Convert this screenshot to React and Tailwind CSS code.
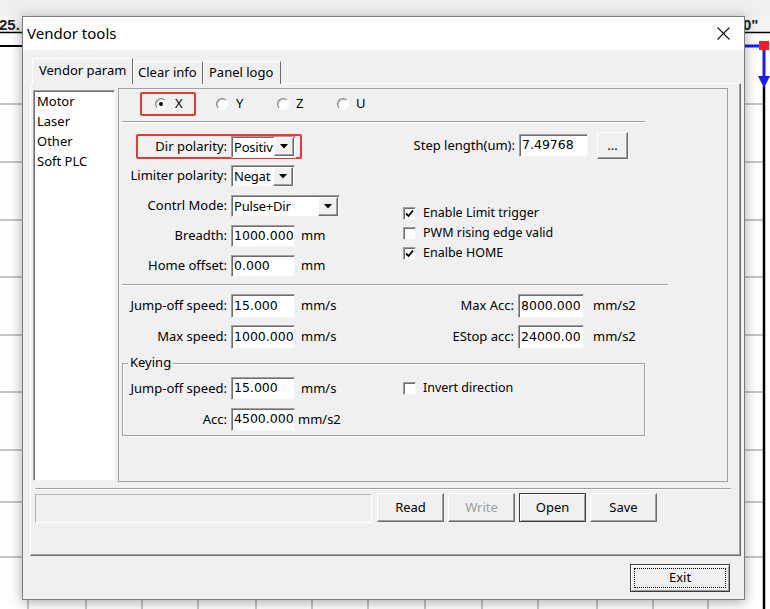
import { useState } from 'react'

const ui = { fontFamily: '"Noto Sans", "Open Sans", sans-serif' }
const num = { fontFamily: '"DejaVu Sans", Verdana, sans-serif' }

const sunken = 'border border-t-[#a0a0a0] border-l-[#a0a0a0] border-r-[#f4f4f4] border-b-[#f4f4f4] shadow-[inset_1px_1px_0_#6d6d6d] bg-white'
const raised = 'border border-t-white border-l-white border-r-[#6d6d6d] border-b-[#6d6d6d] shadow-[inset_-1px_-1px_0_#a0a0a0] bg-[#f0f0f0]'
const etched = 'h-[2px] border-t border-t-[#a0a0a0] border-b border-b-white'

function Radio({ checked }) {
  return (
    <span className="w-[12px] h-[12px] rounded-full border border-t-[#808080] border-l-[#808080] border-r-white border-b-white bg-white shadow-[inset_1px_1px_0_#c8c8c8] flex items-center justify-center shrink-0">
      {checked && <span className="w-[4px] h-[4px] rounded-full bg-black" />}
    </span>
  )
}

function Check({ checked, label }) {
  return (
    <div className="flex items-center h-[20px] text-[12.5px]" style={ui}>
      <span className={`w-[13px] h-[13px] flex items-center justify-center shrink-0 ${sunken}`}>
        {checked && (
          <svg width="9" height="9" viewBox="0 0 9 9">
            <polyline points="1,4.5 3.5,7 8,1.5" fill="none" stroke="#000" strokeWidth="1.8" />
          </svg>
        )}
      </span>
      <span className="ml-[7px]">{label}</span>
    </div>
  )
}

function Combo({ value, w }) {
  return (
    <div className={`flex items-center h-[22px] ${w} ${sunken}`}>
      <span className="flex-1 min-w-0 whitespace-nowrap pl-[2px] text-[13px] leading-[18px] tracking-[-0.2px]" style={ui}>{value}</span>
      <span className={`relative w-[20px] h-[19px] mr-[1px] flex items-center justify-center shrink-0 ${raised}`}>
        <svg width="8" height="5" viewBox="0 0 8 5"><polygon points="0,0 8,0 4,4.5" fill="#000" /></svg>
      </span>
    </div>
  )
}

function Field({ value, w = 'w-[64px]', h = 'h-[23px]' }) {
  return (
    <div className={`flex items-center ${w} ${h} ${sunken}`}>
      <span className="pl-[2px] text-[12.5px] whitespace-nowrap" style={num}>{value}</span>
    </div>
  )
}

function Row({ label, labelW = 'w-[108px]', children, h = 'h-[22px]', mt }) {
  return (
    <div className={`flex items-center ${h} ${mt}`}>
      <span className={`${labelW} text-right text-[13px] whitespace-nowrap`} style={ui}>{label}</span>
      <div className="ml-[4px] flex items-center">{children}</div>
    </div>
  )
}

function Unit({ children, ml = 'ml-[6px]' }) {
  return <span className={`${ml} text-[13px]`} style={ui}>{children}</span>
}

function Btn({ children, disabled, def, w = 'w-[67px]', h = 'h-[29px]' }) {
  return (
    <button
      className={`${w} ${h} text-[13px] flex items-center justify-center ${def ? 'border border-[#3c3c3c] shadow-[inset_1px_1px_0_white,inset_-1px_-1px_0_#a0a0a0] bg-[#f0f0f0]' : raised} ${disabled ? 'text-[#a0a0a0]' : 'text-black'}`}
      style={ui}
    >
      {children}
    </button>
  )
}

function Background() {
  const hy = [104, 162, 220, 277, 335, 392, 450, 502, 557]
  const vx = [28, 86, 142, 198, 256, 312, 368, 425, 482, 538, 597, 653, 708]
  return (
    <svg width="770" height="609" className="absolute inset-0">
      <rect width="770" height="609" fill="#fff" />
      <rect width="770" height="16" fill="#efefef" />
      {hy.map(y => <line key={y} x1="0" x2="764" y1={y} y2={y} stroke="#8c8c8c" strokeWidth="1" />)}
      {vx.map(x => <line key={x} x1={x} x2={x} y1="46" y2="609" stroke="#8c8c8c" strokeWidth="1" />)}
      <rect x="0" y="16" width="22" height="17" fill="#f4f4f4" />
      <text x="-1" y="30" fontSize="15" fontWeight="bold" fontFamily="Liberation Sans, sans-serif" fill="#222">25.</text>
      <line x1="0" x2="22" y1="32.5" y2="32.5" stroke="#000" strokeWidth="1.5" />
      <line x1="0" x2="22" y1="46" y2="46" stroke="#000" strokeWidth="2" />
      <rect x="745" y="16" width="25" height="17" fill="#f4f4f4" />
      <text x="743" y="30" fontSize="15" fontWeight="bold" fontFamily="Liberation Sans, sans-serif" fill="#222">0"</text>
      <line x1="745" x2="770" y1="32.5" y2="32.5" stroke="#000" strokeWidth="1.5" />
      <line x1="745" x2="762" y1="46" y2="46" stroke="#1a1aff" strokeWidth="3" />
      <line x1="764" x2="764" y1="86" y2="609" stroke="#000" strokeWidth="2.5" />
      <line x1="764" x2="764" y1="46" y2="78" stroke="#1a1aff" strokeWidth="3" />
      <polygon points="758,76 770,76 764,88" fill="#1a1aff" />
      <rect x="759" y="41" width="10" height="9" fill="#ff1a1a" />
    </svg>
  )
}

export default function App() {
  const [tab] = useState(0)
  const tabs = ['Vendor param', 'Clear info', 'Panel logo']
  return (
    <div className="relative w-[770px] h-[609px] overflow-hidden">
      <Background />

      <div className="absolute left-[22px] top-[16px] w-[723px] h-[584px] bg-[#f0f0f0] border border-[#7d7d7d] shadow-[0_2px_12px_rgba(0,0,0,0.35)] flex flex-col">
        <div className="h-[33px] bg-white flex items-center justify-between shrink-0">
          <span className="pl-[4px] text-[15px] text-black" style={ui}>Vendor tools</span>
          <svg width="13" height="13" viewBox="0 0 13 13" className="mr-[14px]">
            <path d="M0.5 0.5 L12.5 12.5 M12.5 0.5 L0.5 12.5" stroke="#111" strokeWidth="1.1" />
          </svg>
        </div>

        <div className="ml-[7px] mt-[8px] w-[711px]">
          <div className="flex items-end h-[26px] pl-[2px] relative z-10 -mb-[1px]">
            {tabs.map((t, i) => (
              <div
                key={t}
                className={`flex items-center text-[13px] border-t border-l border-t-white border-l-white border-r border-r-[#6d6d6d] bg-[#f0f0f0] ${i === tab ? 'h-[26px] w-[101px] pl-[6px] pb-[2px]' : i === 1 ? 'h-[23px] w-[70px] pl-[4px]' : 'h-[23px] w-[78px] pl-[5px]'}`}
                style={ui}
              >
                {t}
              </div>
            ))}
          </div>

          <div className="h-[473px] border border-t-white border-l-white border-r-[#6d6d6d] border-b-[#6d6d6d] shadow-[inset_-1px_-1px_0_#a0a0a0] flex flex-col">
            <div className="flex items-start">
              <div className={`ml-[2px] mt-[6px] w-[82px] h-[391px] pl-[3px] ${sunken}`}>
                {['Motor', 'Laser', 'Other', 'Soft PLC'].map(it => (
                  <div key={it} className="h-[20px] leading-[20px] text-[13px]" style={ui}>{it}</div>
                ))}
              </div>

              <div className="ml-[3px] mt-[4px] w-[610px] h-[394px] border border-[#a0a0a0] flex flex-col">
                {/* axis radios */}
                <div className="flex items-center h-[24px] mt-[3px] text-[13px]" style={ui}>
                  <div className="ml-[21px] w-[56px] h-[24px] border-2 border-[#e53935] rounded-[2px] flex items-center">
                    <span className="ml-[13px]"><Radio checked /></span>
                    <span className="ml-[8px]">X</span>
                  </div>
                  <div className="ml-[20px] w-[61px] flex items-center"><Radio /><span className="ml-[8px]">Y</span></div>
                  <div className="w-[60px] flex items-center"><Radio /><span className="ml-[7px]">Z</span></div>
                  <div className="flex items-center"><Radio /><span className="ml-[7px]">U</span></div>
                </div>

                <div className={`ml-[3px] mt-[5px] w-[523px] ${etched}`} />

                <div className="flex">
                  <div className="w-[281px] flex flex-col">
                    <div className="ml-[17px] mt-[11px] w-[166px] h-[25px] border-2 border-[#e53935] rounded-[2px] flex items-center">
                      <span className="w-[89px] text-right text-[13px]" style={ui}>Dir polarity:</span>
                      <div className="ml-[4px]"><Combo value="Positiv" w="w-[65px]" /></div>
                    </div>
                    <Row label="Limiter polarity:" mt="mt-[6px]"><Combo value="Negat" w="w-[64px]" /></Row>
                    <Row label="Contrl Mode:" mt="mt-[8px]"><Combo value="Pulse+Dir" w="w-[109px]" /></Row>
                    <Row label="Breadth:" mt="mt-[8px]"><Field value="1000.000" h="h-[22px]" /><Unit>mm</Unit></Row>
                    <Row label="Home offset:" mt="mt-[8px]"><Field value="0.000" h="h-[22px]" /><Unit>mm</Unit></Row>
                  </div>
                  <div className="flex flex-col">
                    <div className="flex items-center h-[27px] mt-[9px]">
                      <span className="w-[115px] text-right text-[13px]" style={ui}>Step length(um):</span>
                      <div className="ml-[4px]"><Field value="7.49768" w="w-[69px]" /></div>
                      <div className="ml-[9px]"><Btn w="w-[31px]" h="h-[27px]">...</Btn></div>
                    </div>
                    <div className="ml-[3px] mt-[44px]">
                      <Check checked label="Enable Limit trigger" />
                      <Check label="PWM rising edge valid" />
                      <Check checked label="Enalbe HOME" />
                    </div>
                  </div>
                </div>

                <div className={`ml-[3px] mt-[7px] w-[546px] ${etched}`} />

                {[
                  ['Jump-off speed:', '15.000', 'Max Acc:', '8000.000', 'mt-[8px]'],
                  ['Max speed:', '1000.000', 'EStop acc:', '24000.00', 'mt-[7px]'],
                ].map(([l, v, rl, rv, mt]) => (
                  <div key={l} className={`flex items-center h-[24px] ${mt}`}>
                    <div className="w-[281px] flex items-center">
                      <span className="w-[108px] text-right text-[13px]" style={ui}>{l}</span>
                      <div className="ml-[4px]"><Field value={v} h="h-[24px]" /></div>
                      <Unit>mm/s</Unit>
                    </div>
                    <span className="w-[114px] text-right text-[13px]" style={ui}>{rl}</span>
                    <div className="ml-[4px]"><Field value={rv} w="w-[66px]" h="h-[24px]" /></div>
                    <Unit ml="ml-[9px]">mm/s2</Unit>
                  </div>
                ))}

                <div className="relative ml-[3px] mt-[14px] w-[523px] h-[73px] border border-[#a0a0a0] shadow-[inset_1px_1px_0_white,1px_1px_0_white]">
                  <span className="absolute left-[5px] -top-[11px] px-[2px] bg-[#f0f0f0] text-[13px]" style={ui}>Keying</span>
                  <div className="flex items-center h-[23px] mt-[13px]">
                    <div className="w-[277px] flex items-center">
                      <span className="w-[104px] text-right text-[13px]" style={ui}>Jump-off speed:</span>
                      <div className="ml-[4px]"><Field value="15.000" /></div>
                      <Unit>mm/s</Unit>
                    </div>
                    <div className="ml-[3px]"><Check label="Invert direction" /></div>
                  </div>
                  <div className="flex items-center h-[23px] mt-[8px]">
                    <span className="w-[104px] text-right text-[13px]" style={ui}>Acc:</span>
                    <div className="ml-[4px]"><Field value="4500.000" /></div>
                    <Unit ml="ml-[3px]">mm/s2</Unit>
                  </div>
                </div>
              </div>
            </div>

            <div className={`ml-[4px] mt-[6px] w-[696px] ${etched}`} />

            <div className="flex items-start mt-[3px]">
              <div className="ml-[4px] mt-[1px] w-[337px] h-[29px] border border-t-[#b4b4b4] border-l-[#b4b4b4] border-r-white border-b-white bg-[#f0f0f0]" />
              <div className="ml-[5px] flex gap-[4px]">
                <Btn>Read</Btn>
                <Btn disabled>Write</Btn>
                <Btn def>Open</Btn>
                <Btn>Save</Btn>
              </div>
            </div>
          </div>
        </div>

        <div className="flex justify-end mt-[8px] mr-[14px]">
          <button className="relative w-[100px] h-[28px] border border-[#3c3c3c] shadow-[inset_1px_1px_0_white,inset_-1px_-1px_0_#a0a0a0] bg-[#f0f0f0] text-[13px] flex items-center justify-center" style={ui}>
            <span className="absolute inset-[3px] border border-dotted border-black" />
            Exit
          </button>
        </div>
      </div>
    </div>
  )
}
